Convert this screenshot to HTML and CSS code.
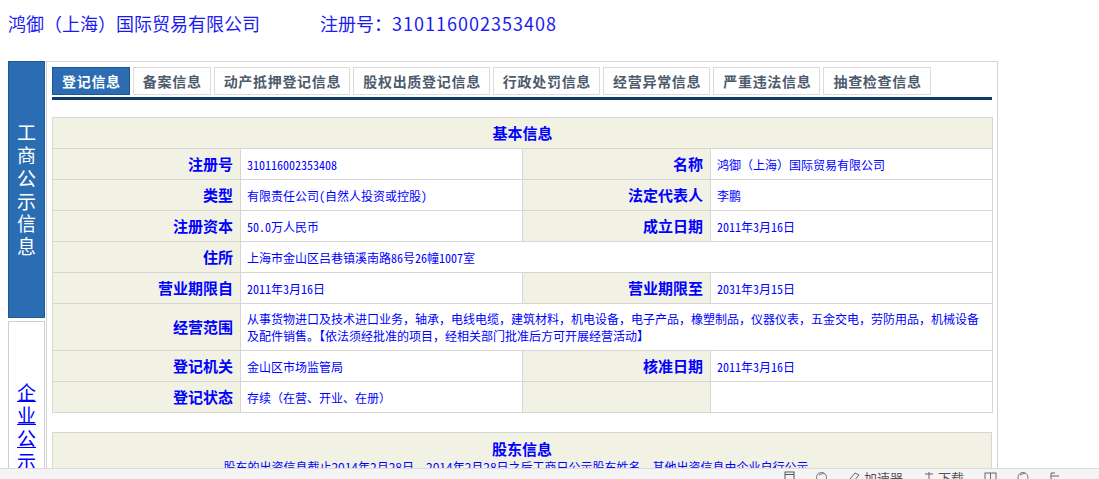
FILE: index.html
```html
<!DOCTYPE html>
<html>
	<head>
		<meta charset="UTF-8">
		<title>企业信息</title>
		<link rel="stylesheet" href="styles.css">
	</head>

	<body>
		<div class="head">
			<span class="h_name">鸿御（上海）国际贸易有限公司</span>
			<span class="h_reg">注册号：<span class="h_num">310116002353408</span></span>
		</div>
		<div class="wrap">
			<div class="side">
				<div class="side_on"><p>工商公示信息</p></div>
				<div class="side_off"><a href="#">企业公示信息</a></div>
			</div>
			<div class="main">
				<div class="tabs">
					<span class="tab on">登记信息</span>
					<span class="tab">备案信息</span>
					<span class="tab">动产抵押登记信息</span>
					<span class="tab">股权出质登记信息</span>
					<span class="tab">行政处罚信息</span>
					<span class="tab">经营异常信息</span>
					<span class="tab">严重违法信息</span>
					<span class="tab">抽查检查信息</span>
				</div>
				<table class="info">
					<colgroup>
						<col class="c_label"><col class="c_val"><col class="c_label"><col class="c_val">
					</colgroup>
					<tr><th colspan="4" class="cap">基本信息</th></tr>
					<tr>
						<th>注册号</th><td class="hw">310116002353408</td>
						<th>名称</th><td>鸿御（上海）国际贸易有限公司</td>
					</tr>
					<tr>
						<th>类型</th><td class="hw">有限责任公司(自然人投资或控股)</td>
						<th>法定代表人</th><td>李鹏</td>
					</tr>
					<tr>
						<th>注册资本</th><td class="hw">50.0万人民币</td>
						<th>成立日期</th><td class="hw">2011年3月16日</td>
					</tr>
					<tr>
						<th>住所</th><td colspan="3" class="hw">上海市金山区吕巷镇溪南路86号26幢1007室</td>
					</tr>
					<tr>
						<th>营业期限自</th><td class="hw">2011年3月16日</td>
						<th>营业期限至</th><td class="hw">2031年3月15日</td>
					</tr>
					<tr class="tall">
						<th>经营范围</th><td colspan="3">从事货物进口及技术进口业务，轴承，电线电缆，建筑材料，机电设备，电子产品，橡塑制品，仪器仪表，五金交电，劳防用品，机械设备及配件销售。【依法须经批准的项目，经相关部门批准后方可开展经营活动】</td>
					</tr>
					<tr>
						<th>登记机关</th><td>金山区市场监管局</td>
						<th>核准日期</th><td class="hw">2011年3月16日</td>
					</tr>
					<tr>
						<th>登记状态</th><td>存续（在营、开业、在册）</td>
						<th></th><td></td>
					</tr>
				</table>
				<table class="info gd">
					<tr>
						<th class="cap">
							<p>股东信息</p>
							<p class="note">股东的出资信息截止2014年2月28日。2014年2月28日之后工商只公示股东姓名，其他出资信息由企业自行公示。</p>
						</th>
					</tr>
				</table>
			</div>
		</div>

		<div class="statusbar">
			<span class="sb_item"><svg width="11" height="12" viewBox="0 0 11 12"><rect x="1" y="1" width="9" height="10" fill="none" stroke="#555"/><line x1="1" y1="3.5" x2="10" y2="3.5" stroke="#555"/></svg></span>
			<span class="sb_item"><svg width="13" height="12" viewBox="0 0 13 12"><circle cx="6.5" cy="6.5" r="5" fill="none" stroke="#777"/><line x1="4" y1="4" x2="9" y2="2" stroke="#777"/></svg></span>
			<span class="sb_item"><svg width="13" height="12" viewBox="0 0 13 12"><path d="M2 8 L7 2 L11 4 L6 10 Z" fill="none" stroke="#666"/></svg>加速器</span>
			<span class="sb_item"><svg width="12" height="12" viewBox="0 0 12 12"><line x1="6" y1="1" x2="6" y2="10" stroke="#666"/><line x1="2" y1="3" x2="10" y2="3" stroke="#666"/></svg>下载</span>
			<span class="sb_item"><svg width="13" height="12" viewBox="0 0 13 12"><rect x="1" y="2" width="11" height="9" fill="none" stroke="#666"/><line x1="6.5" y1="2" x2="6.5" y2="11" stroke="#666"/></svg></span>
			<span class="sb_item"><svg width="12" height="12" viewBox="0 0 12 12"><circle cx="6" cy="6.5" r="5" fill="none" stroke="#777"/><line x1="3" y1="4" x2="8" y2="2" stroke="#777"/></svg></span>
			<span class="sb_item"><svg width="12" height="12" viewBox="0 0 12 12"><path d="M2 11 V2 H6" fill="none" stroke="#666"/><line x1="2" y1="5" x2="10" y2="5" stroke="#666"/></svg></span>
		</div>
	</body>
</html>
```

FILE: styles.css
```css
* {
	margin: 0;
	padding: 0;
}

body {
	padding: 0 8px;
	background-color: #fff;
	font-family: "Noto Sans CJK SC", "Noto Sans", sans-serif;
	color: #0000ff;
	font-size: 12px;
}

.head {
	height: 61px;
	padding-top: 8px;
	box-sizing: border-box;
	line-height: 30px;
	font-size: 18px;
	color: #1c1cf0;
}

.head .h_reg {
	margin-left: 56px;
}

.head .h_num {
	letter-spacing: 1px;
}

.wrap {
	display: flex;
	align-items: flex-start;
}

.side {
	width: 37px;
	margin-right: 1px;
}

.side_on,
.side_off {
	height: 257px;
	box-sizing: border-box;
	display: flex;
	align-items: center;
	justify-content: center;
	font-size: 19px;
	line-height: 22.7px;
}

.side_on {
	background-color: #2b6db3;
	border: 1px solid #1f5894;
	color: #fff;
}

.side_off {
	margin-top: 3px;
	background-color: #fff;
	border: 1px solid #cfcfcf;
}

.side_on p,
.side_off a {
	width: 19px;
	text-align: center;
	word-break: break-all;
}

.side_off a {
	color: #0000ff;
	text-decoration: underline;
}

.main {
	width: 952px;
	box-sizing: border-box;
	height: 430px;
	border: 1px solid #d4d4d4;
	padding: 5px 5px 0;
}

.tabs {
	display: flex;
	gap: 3px;
	padding-bottom: 2px;
	border-bottom: 3px solid #0e3a6c;
}

.tab {
	height: 28px;
	box-sizing: border-box;
	line-height: 26px;
	padding: 0 8px 0 9px;
	border: 1px solid #dcdcdc;
	background-color: #fff;
	color: #4d5b6c;
	font-size: 14px;
	font-weight: bold;
	letter-spacing: 0.7px;
}

.tab.on {
	background-color: #2b6cb2;
	border-color: #1e5592;
	color: #fff;
}

.info {
	width: 940px;
	margin-top: 17px;
	border-collapse: collapse;
	table-layout: fixed;
}

.info .c_label {
	width: 188px;
}

.info .c_val {
	width: 282px;
}

.info th,
.info td {
	height: 30px;
	padding-top: 0;
	padding-bottom: 0;
	border: 1px solid #d6d6d6;
}

.info th {
	background-color: #f2f2e4;
	text-align: right;
	padding-right: 7px;
	font-size: 15px;
	font-weight: bold;
	line-height: 20px;
	color: #0000ff;
}

.info td {
	padding-left: 6px;
	padding-right: 6px;
	font-size: 12px;
	line-height: 17px;
	color: #0000ff;
}

.info td.hw {
	font-feature-settings: "hwid" 1;
}

.info tr.tall td,
.info tr.tall th {
	height: 46px;
}

.info th.cap {
	text-align: center;
	padding: 0;
}

.gd {
	margin-top: 19px;
}

.gd th.cap {
	padding-top: 6px;
	vertical-align: top;
	line-height: 20px;
	height: 60px;
}

.gd .note {
	font-size: 12px;
	font-weight: normal;
	line-height: 16px;
}

.statusbar {
	position: fixed;
	left: 0;
	right: 0;
	bottom: 0;
	height: 10px;
	overflow: hidden;
	background-color: #f4f4f4;
	border-top: 1px solid #dddddd;
	display: flex;
	padding-left: 784px;
	gap: 20px;
	font-size: 13px;
	color: #555;
	line-height: 14px;
}

.sb_item {
	display: flex;
	align-items: flex-start;
	gap: 3px;
	padding-top: 2px;
}
```
